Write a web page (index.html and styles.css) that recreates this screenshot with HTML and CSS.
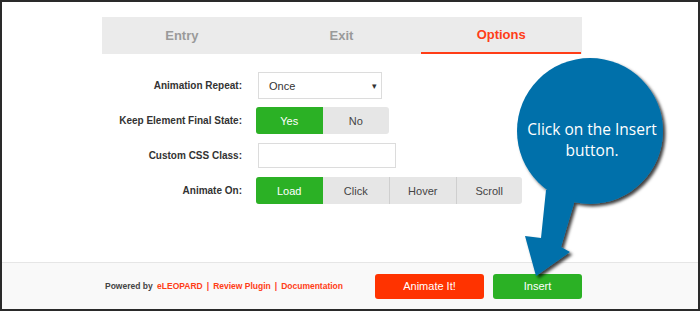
FILE: index.html
```html
<!DOCTYPE html>
<html>
<head>
<meta charset="utf-8">
<link rel="stylesheet" href="styles.css">
</head>
<body>
<div class="frame">
  <div class="main">
    <div class="tabs">
      <div class="tab">Entry</div>
      <div class="tab">Exit</div>
      <div class="tab active">Options</div>
    </div>
    <div class="form">
      <div class="row">
        <div class="label">Animation Repeat:</div>
        <div class="select"><span>Once</span><span class="caret">&#9662;</span></div>
      </div>
      <div class="row">
        <div class="label">Keep Element Final State:</div>
        <div class="group">
          <div class="opt on">Yes</div>
          <div class="opt">No</div>
        </div>
      </div>
      <div class="row">
        <div class="label">Custom CSS Class:</div>
        <div class="input"></div>
      </div>
      <div class="row">
        <div class="label">Animate On:</div>
        <div class="group">
          <div class="opt on">Load</div>
          <div class="opt">Click</div>
          <div class="opt sep">Hover</div>
          <div class="opt sep">Scroll</div>
        </div>
      </div>
    </div>
  </div>
  <div class="footer">
    <div class="footer-inner">
      <div class="credits">Powered by <span class="link">eLEOPARD</span><span class="bar">|</span><span class="link">Review Plugin</span><span class="bar">|</span><span class="link">Documentation</span></div>
      <div class="actions">
        <div class="btn red">Animate It!</div>
        <div class="btn green">Insert</div>
      </div>
    </div>
  </div>
  <div class="callout">
    <svg width="180" height="240" viewBox="500 50 180 240">
      <defs>
        <filter id="sh" x="-20%" y="-20%" width="140%" height="140%">
          <feDropShadow dx="2.5" dy="2.5" stdDeviation="1.5" flood-color="#000" flood-opacity="0.75"/>
        </filter>
      </defs>
      <g filter="url(#sh)" fill="#0670aa">
        <circle cx="590" cy="131" r="73"/>
        <polygon points="546,190 541,238 525,236 536,276 570,252 561,247 578,190"/>
      </g>
    </svg>
    <div class="callout-text">Click on the Insert<br>button.</div>
  </div>
</div>
</body>
</html>
```
FILE: styles.css
```css
html, body {
  margin: 0;
  padding: 0;
  background: #fff;
}
.frame {
  position: relative;
  width: 700px;
  height: 311px;
  box-sizing: border-box;
  border: 2px solid #2a2a2a;
  display: flex;
  flex-direction: column;
  font-family: "Liberation Sans", Arial, sans-serif;
  overflow: hidden;
}
.main {
  flex: 1;
  padding: 15px 0 0 100px;
}
.tabs {
  display: flex;
  width: 480px;
  height: 37px;
  background: #ebebeb;
}
.tab {
  flex: 1;
  display: flex;
  align-items: center;
  justify-content: center;
  font-size: 13px;
  font-weight: bold;
  color: #9a9a9a;
  box-sizing: border-box;
  padding-bottom: 1px;
}
.tab.active {
  color: #ff3d17;
  border-bottom: 2px solid #ff3d17;
  margin-right: 1px;
  padding-bottom: 0;
}
.form {
  display: flex;
  flex-direction: column;
  gap: 8px;
  padding-top: 18px;
}
.row {
  display: flex;
  align-items: center;
  height: 27px;
}
.label {
  width: 140px;
  text-align: right;
  font-size: 10px;
  font-weight: bold;
  color: #333;
  padding-right: 14px;
}
.select {
  margin-left: 2px;
  width: 124px;
  height: 27px;
  box-sizing: border-box;
  border: 1px solid #dcdcdc;
  display: flex;
  align-items: center;
  justify-content: space-between;
  padding: 0 4px 0 10px;
  font-size: 11px;
  color: #333;
}
.caret {
  font-size: 9px;
  color: #333;
}
.input {
  margin-left: 2px;
  width: 138px;
  height: 25px;
  box-sizing: border-box;
  border: 1px solid #dcdcdc;
}
.group {
  display: flex;
  height: 27px;
  border-radius: 3px;
  overflow: hidden;
  background: #e6e6e6;
}
.opt {
  width: 66.5px;
  display: flex;
  align-items: center;
  justify-content: center;
  font-size: 11px;
  color: #444;
  box-sizing: border-box;
}
.opt.on {
  background: #2bb125;
  color: #fff;
}
.opt.sep {
  border-left: 1px solid #cfcfcf;
}
.footer {
  height: 46px;
  border-top: 1px solid #e6e6e6;
  background: #f9f9f9;
  padding-left: 100px;
}
.footer-inner {
  width: 480px;
  height: 100%;
  display: flex;
  align-items: center;
  justify-content: space-between;
}
.credits {
  padding-left: 3px;
  font-size: 8.5px;
  font-weight: bold;
  color: #444;
}
.credits .link {
  color: #ff3d17;
}
.credits .link:first-child {
  margin-left: 2px;
}
.credits .bar {
  color: #ff3d17;
  padding: 0 4px;
}
.actions {
  display: flex;
  gap: 9px;
}
.btn {
  height: 25px;
  border-radius: 3px;
  display: flex;
  align-items: center;
  justify-content: center;
  color: #fff;
  font-size: 11px;
}
.btn.red {
  width: 109px;
  background: #ff3300;
}
.btn.green {
  width: 89px;
  background: #2bb125;
}
.callout {
  position: absolute;
  left: 498px;
  top: 48px;
  width: 180px;
  height: 240px;
}
.callout svg {
  display: block;
}
.callout-text {
  position: absolute;
  left: 19px;
  top: 69px;
  width: 146px;
  text-align: center;
  color: #fff;
  font-family: "Open Sans", "Noto Sans", sans-serif;
  font-size: 15.5px;
  line-height: 21px;
}
```
